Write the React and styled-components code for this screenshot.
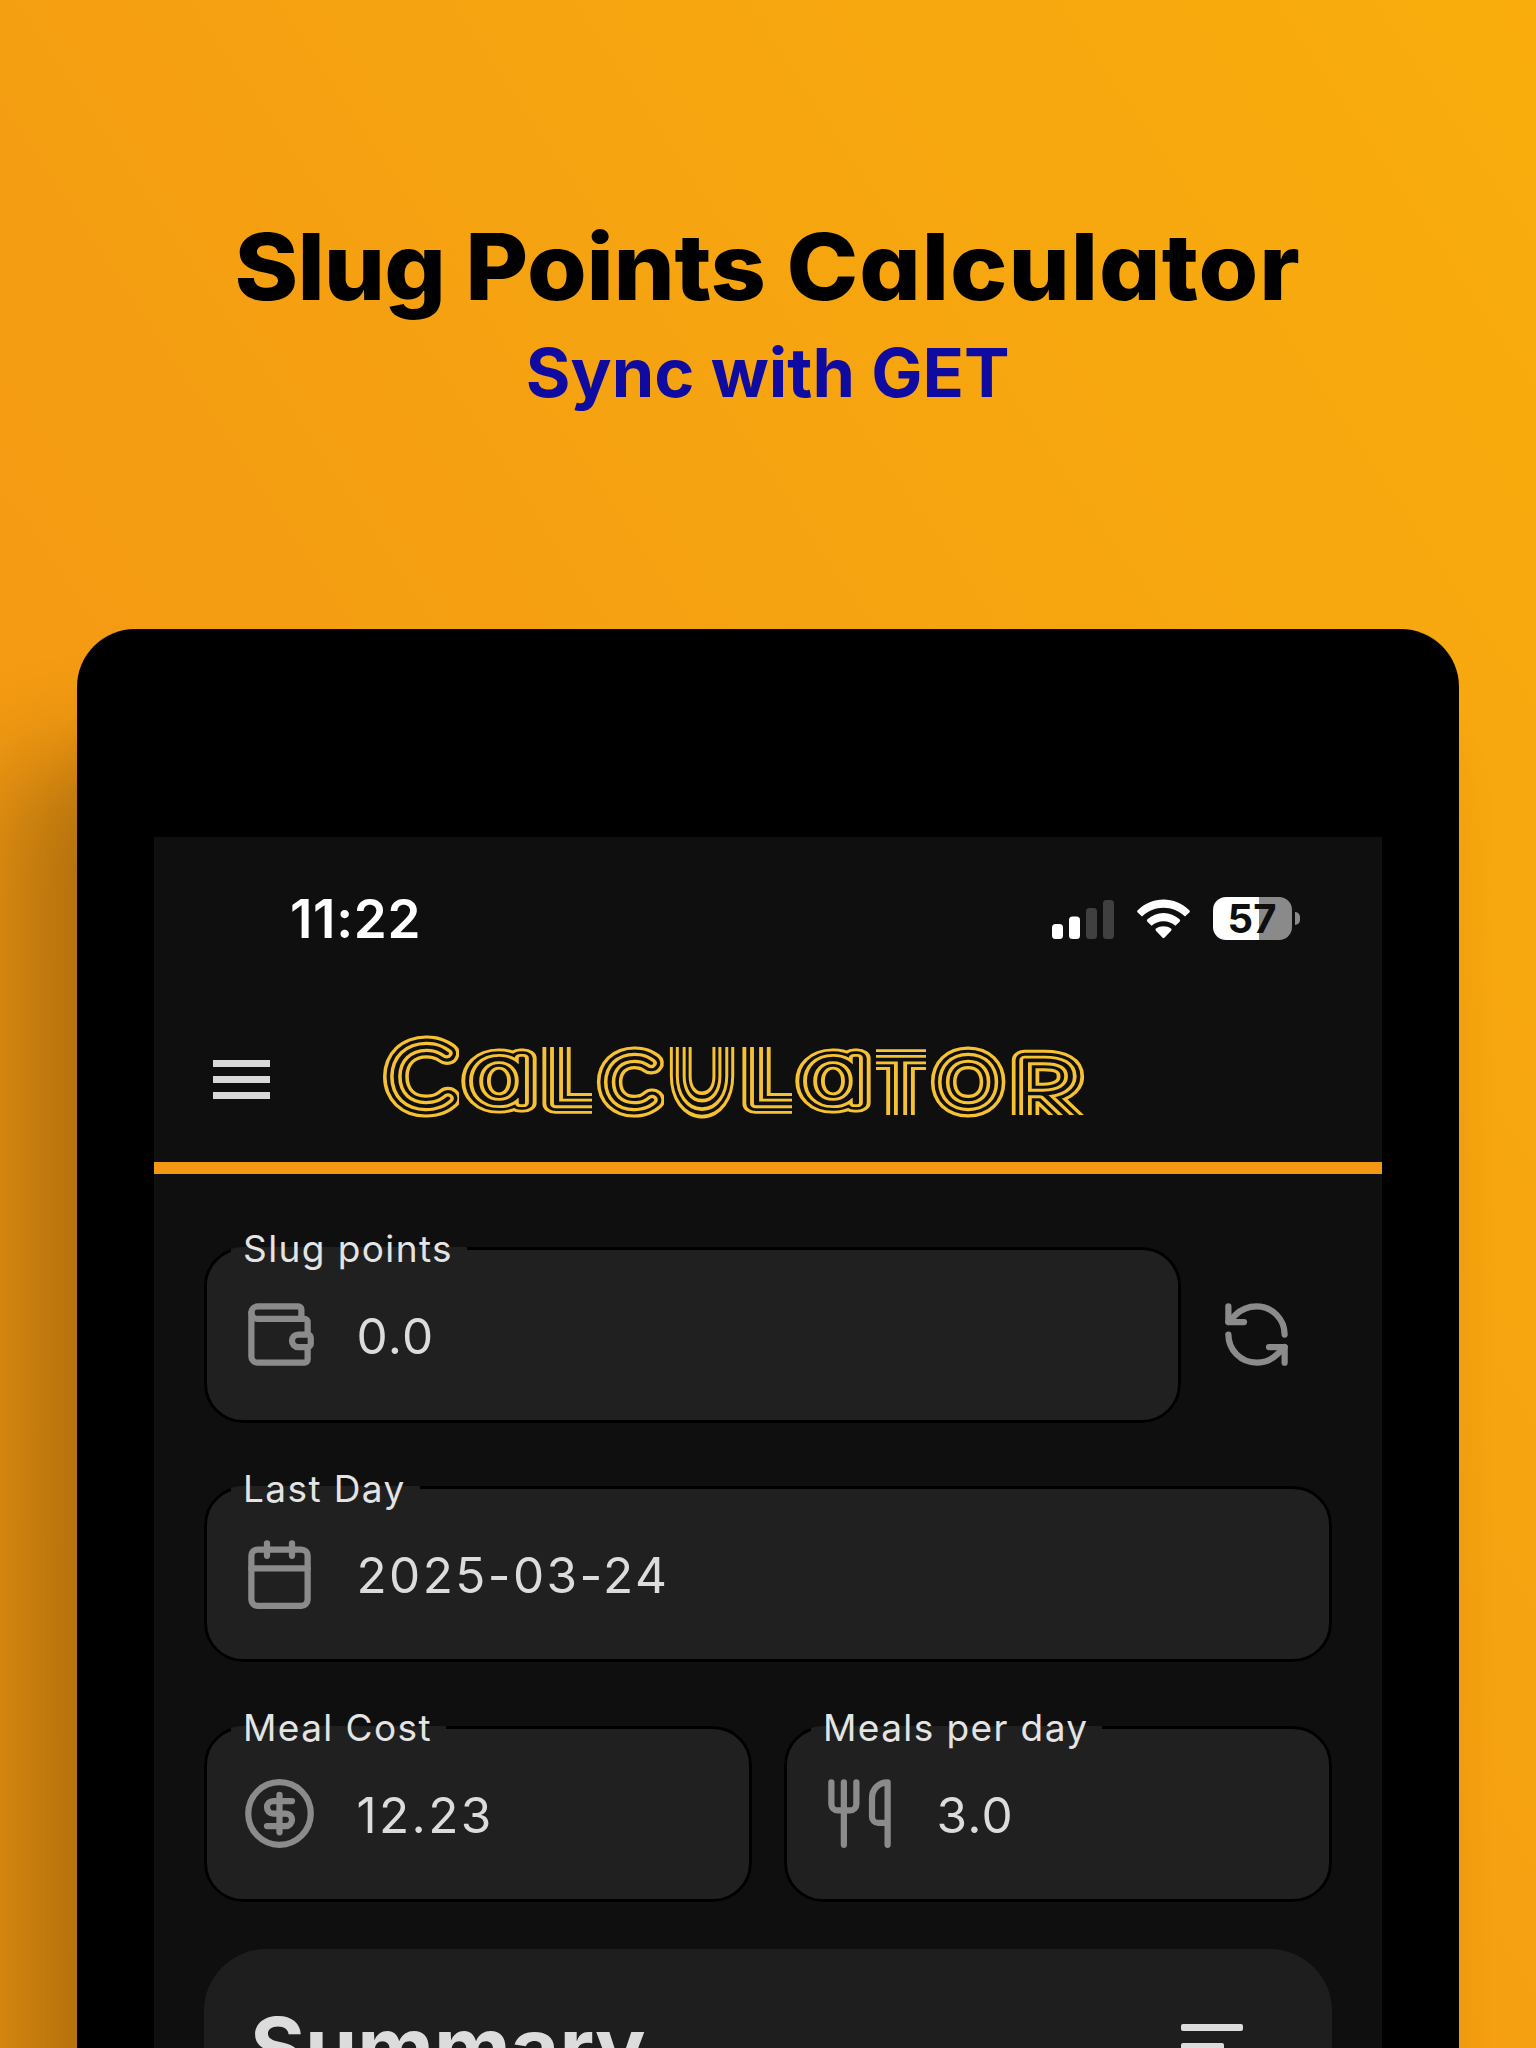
import React from "react";
import styled, { createGlobalStyle } from "styled-components";
import { Wallet, Calendar, CircleDollarSign, Utensils, RefreshCcw } from "lucide-react";

const Global = createGlobalStyle`
  *, *::before, *::after { box-sizing: border-box; }
  body { margin: 0; background: #f6a211; font-family: Inter, "Noto Sans", sans-serif; }
`;

const Stage = styled.main`
  width: 1536px;
  height: 2048px;
  overflow: hidden;
  display: flex;
  flex-direction: column;
  align-items: center;
  background: linear-gradient(56deg, #f49a11 0%, #f49b13 36%, #f6a410 65%, #f9ad0c 100%);
`;

const Hero = styled.header`
  height: 629px;
  flex: none;
  padding-top: 212px;
  text-align: center;
  font-feature-settings: "cv11";
`;

const Title = styled.h1`
  margin: 0;
  font-size: 92px;
  line-height: 110px;
  font-weight: 800;
  color: #000;
  white-space: nowrap;
  transform: scaleX(1.05);
`;

const Word = styled.span`
  letter-spacing: ${(p) => p.$track}px;
`;

const Subtitle = styled.p`
  margin: 9px 0 0;
  font-size: 67px;
  line-height: 84px;
  font-weight: 650;
  color: #0f0ba1;
  white-space: nowrap;
  transform: scaleX(1.02);
`;

const Device = styled.section`
  width: 1382px;
  flex: none;
  padding: 208px 77px 0;
  border-radius: 58px 58px 0 0;
  background: #000;
  box-shadow:
    -80px 130px 100px rgba(0, 0, 0, 0.25),
    0 90px 50px rgba(0, 0, 0, 0.04);
`;

const Screen = styled.div`
  height: 1300px;
  background: #0f0f0f;
`;

const StatusBar = styled.div`
  height: 163px;
  padding: 0 82px 0 136px;
  display: flex;
  align-items: center;
  justify-content: space-between;
`;

const Clock = styled.span`
  font-size: 53px;
  line-height: 64px;
  font-weight: 600;
  letter-spacing: 0.7px;
  color: #fff;
`;

const StatusIcons = styled.div`
  display: flex;
  align-items: center;
  gap: 23px;
`;

const BatteryWrap = styled.div`
  display: flex;
  align-items: center;
  gap: 3px;
`;

const BatteryBody = styled.div`
  width: 79px;
  height: 43px;
  padding-right: 1px;
  border-radius: 13px;
  display: flex;
  align-items: center;
  justify-content: center;
  background: linear-gradient(90deg, #fff 46px, #8a8a8a 46px);
  color: #0f0f0f;
  font-size: 40px;
  line-height: 43px;
  font-weight: 650;
`;

const BatteryTip = styled.div`
  width: 5px;
  height: 13px;
  border-radius: 0 5px 5px 0;
  background: #8a8a8a;
`;

const AppBar = styled.div`
  height: 174px;
  padding: 34px 0 0 59px;
  display: flex;
  align-items: flex-start;
  border-bottom: 12px solid #f39812;
`;

const MenuButton = styled.div`
  width: 57px;
  margin: 26px 113px 0 0;
  display: flex;
  flex-direction: column;
  gap: 9px;
`;

const MenuBar = styled.span`
  height: 7px;
  background: #d9d9d9;
`;

const Wordmark = styled.svg`
  display: block;
  overflow: visible;
  text {
    font-size: 100px;
    font-weight: 100;
    font-feature-settings: "cv11";
    vector-effect: non-scaling-stroke;
  }
`;

const Stripe = styled.g`
  fill: ${(p) => p.$color};
  stroke: ${(p) => p.$color};
  stroke-width: ${(p) => p.$width}px;
  stroke-linejoin: round;
`;

const Content = styled.div`
  padding: 50px 50px 0 50px;
  display: flex;
  flex-direction: column;
  gap: 41px;
`;

const Row = styled.div`
  display: flex;
  gap: 32px;
`;

const FieldBox = styled.fieldset`
  flex: ${(p) => (p.$width ? `0 0 ${p.$width}px` : "1 1 0")};
  min-width: 0;
  height: 198.5px;
  margin: 0;
  padding: 0 0 0 34.5px;
  border: 3px solid #000;
  border-radius: 39px;
  background: #202020;
`;

const Legend = styled.legend`
  height: 48px;
  margin-left: -10.5px;
  padding: 1px 14px 0 12px;
  font-size: 37px;
  line-height: 48px;
  letter-spacing: 1.4px;
  color: #e4e4e4;
`;

const FieldBody = styled.div`
  height: 125px;
  display: flex;
  align-items: center;
  gap: 40px;
  color: #8b8b8b;
`;

const Value = styled.span`
  padding-top: 2px;
  font-size: 49.5px;
  line-height: 60px;
  letter-spacing: ${(p) => p.$track}px;
  color: #dcdcdc;
`;

const SyncButton = styled.div`
  padding: 73px 0 0 6px;
  color: #8b8b8b;
`;

const SummaryCard = styled.section`
  height: 300px;
  margin-top: 6px;
  padding: 47px 89px 0 46px;
  display: flex;
  justify-content: space-between;
  border-radius: 62px;
  background: #1e1e1e;
`;

const SummaryTitle = styled.h2`
  margin: 0;
  font-size: 84px;
  line-height: 104px;
  font-weight: 700;
  color: #dcdcdc;
`;

const SortLines = styled.div`
  padding-top: 28px;
  display: flex;
  flex-direction: column;
  gap: 12px;
`;

const SortLine = styled.span`
  width: ${(p) => p.$width}px;
  height: 7px;
  border-radius: 2px;
  background: #dcdcdc;
`;

/* Ink box of each thin glyph at 100px: [left, right, ascent, descent]. */
const INK = {
  C: ["Lato", 6.5, 64.5, 71, 0.5],
  O: ["Lato", 6.5, 71.5, 71, 0.5],
  U: ["Lato", 10.5, 61.5, 71, 0.5],
  L: ["Lato", 11, 49, 71, 0],
  T: ["Lato", 1, 56, 70.5, 0],
  R: ["Lato", 11, 58, 71, 0],
  a: ["Inter", 6.5, 50, 55, 1],
};

/* box: centre line of the striped band [x0, y0, x1, y1]; clip: visible area. */
const LETTERS = [
  { ch: "C", box: [12, 12, 66, 72], clip: [0, 0, 76, 84] },
  { ch: "a", box: [92, 24, 142, 70], clip: [78, 8, 155, 81] },
  { ch: "L", box: [172, 0, 222, 69.500], clip: [158, 13, 209, 82] },
  { ch: "C", box: [226, 23, 270, 72], clip: [212, 10, 281, 85] },
  { ch: "U", box: [297, -5, 341, 72], clip: [283, 13, 355, 85] },
  { ch: "L", box: [372, 0, 422, 69.500], clip: [358, 13, 409, 82] },
  { ch: "a", box: [426, 24, 476, 70], clip: [412, 8, 489, 81] },
  { ch: "T", box: [477, 24.500, 558, 100], clip: [493, 12, 543, 81] },
  { ch: "O", box: [560, 23, 610, 72], clip: [546, 10, 624, 85] },
  { ch: "R", box: [641, 25, 697, 92], clip: [628, 12, 703, 81] },
];

const STRIPES = [
  ["#f7c231", 23.4],
  ["#0f0f0f", 16.7],
  ["#f7c231", 9.9],
  ["#0f0f0f", 3.2],
];

function BrandTitle() {
  return (
    <Wordmark width="704" height="86" viewBox="0 0 704 86" aria-label="Calculator">
      {LETTERS.map(({ ch, box, clip }, i) => {
        const [font, l, r, asc, desc] = INK[ch];
        const sx = (box[2] - box[0]) / (r - l);
        const sy = (box[3] - box[1]) / (asc + desc);
        const place = `matrix(${sx} 0 0 ${sy} ${box[0] - l * sx} ${box[3] - desc * sy})`;
        return (
          <g key={i} clipPath={`url(#clip-${i})`}>
            <clipPath id={`clip-${i}`}>
              <rect x={clip[0]} y={clip[1]} width={clip[2] - clip[0]} height={clip[3] - clip[1]} />
            </clipPath>
            {STRIPES.map(([color, width], n) => (
              <Stripe key={n} $color={color} $width={width}>
                {n === 0 ? (
                  <text id={`letter-${i}`} transform={place} fontFamily={font}>
                    {ch}
                  </text>
                ) : (
                  <use href={`#letter-${i}`} />
                )}
              </Stripe>
            ))}
          </g>
        );
      })}
    </Wordmark>
  );
}

function Field({ label, value, icon: Icon, width, track = 2.4 }) {
  return (
    <FieldBox $width={width}>
      <Legend>{label}</Legend>
      <FieldBody>
        <Icon size={75} strokeWidth={2} />
        <Value $track={track}>{value}</Value>
      </FieldBody>
    </FieldBox>
  );
}

export default function App() {
  return (
    <Stage>
      <Global />
      <Hero>
        <Title>
          <Word $track={-0.9}>Slug </Word>
          <Word $track={-0.3}>Points </Word>
          <Word $track={0.9}>Calculator</Word>
        </Title>
        <Subtitle>Sync with GET</Subtitle>
      </Hero>
      <Device>
        <Screen>
          <StatusBar>
            <Clock>11:22</Clock>
            <StatusIcons>
              <svg width="62" height="40" viewBox="0 0 62 40">
                <rect x="0" y="25" width="11" height="15" rx="3.5" fill="#fff" />
                <rect x="17" y="17.500" width="11" height="22.500" rx="3.5" fill="#fff" />
                <rect x="34" y="9" width="11" height="31" rx="3.5" fill="#404040" />
                <rect x="51" y="1" width="11" height="39" rx="3.5" fill="#404040" />
              </svg>
              <svg width="53" height="40" viewBox="0 0 53 40" fill="#fff">
                <path d="M26.500 0.500C36 0.500 45 4.300 52.300 11.200Q53.400 12.400 52.300 13.600L48 17.500C42 11.800 34.500 8.700 26.500 8.700S11 11.800 5 17.500L0.700 13.600Q-0.400 12.400 0.700 11.200C8 4.300 17 0.500 26.500 0.500Z" />
                <path d="M26.500 14C32.600 14 38 16.300 42.600 20.300Q43.700 21.500 42.600 22.700L38.400 26.700C35 23.800 31 22.200 26.500 22.200S18 23.800 14.600 26.700L10.400 22.700Q9.300 21.500 10.400 20.300C15 16.300 20.400 14 26.500 14Z" />
                <path d="M26.500 27.200C29.300 27.200 31.800 28 33.900 29.500Q35.200 30.500 34.100 31.700L27.400 38.800Q26.500 39.600 25.600 38.800L18.900 31.700Q17.800 30.500 19.100 29.500C21.200 28 23.700 27.200 26.500 27.200Z" />
              </svg>
              <BatteryWrap>
                <BatteryBody>57</BatteryBody>
                <BatteryTip />
              </BatteryWrap>
            </StatusIcons>
          </StatusBar>
          <AppBar>
            <MenuButton>
              <MenuBar />
              <MenuBar />
              <MenuBar />
            </MenuButton>
            <BrandTitle />
          </AppBar>
          <Content>
            <Row>
              <Field label="Slug points" value="0.0" icon={Wallet} width={977} track={1.3} />
              <SyncButton>
                <RefreshCcw size={75} strokeWidth={2} />
              </SyncButton>
            </Row>
            <Row>
              <Field label="Last Day" value="2025-03-24" icon={Calendar} />
            </Row>
            <Row>
              <Field label="Meal Cost" value="12.23" icon={CircleDollarSign} />
              <Field label="Meals per day" value="3.0" icon={Utensils} track={1.3} />
            </Row>
            <SummaryCard>
              <SummaryTitle>Summary</SummaryTitle>
              <SortLines>
                <SortLine $width={62} />
                <SortLine $width={43} />
                <SortLine $width={24} />
              </SortLines>
            </SummaryCard>
          </Content>
        </Screen>
      </Device>
    </Stage>
  );
}
